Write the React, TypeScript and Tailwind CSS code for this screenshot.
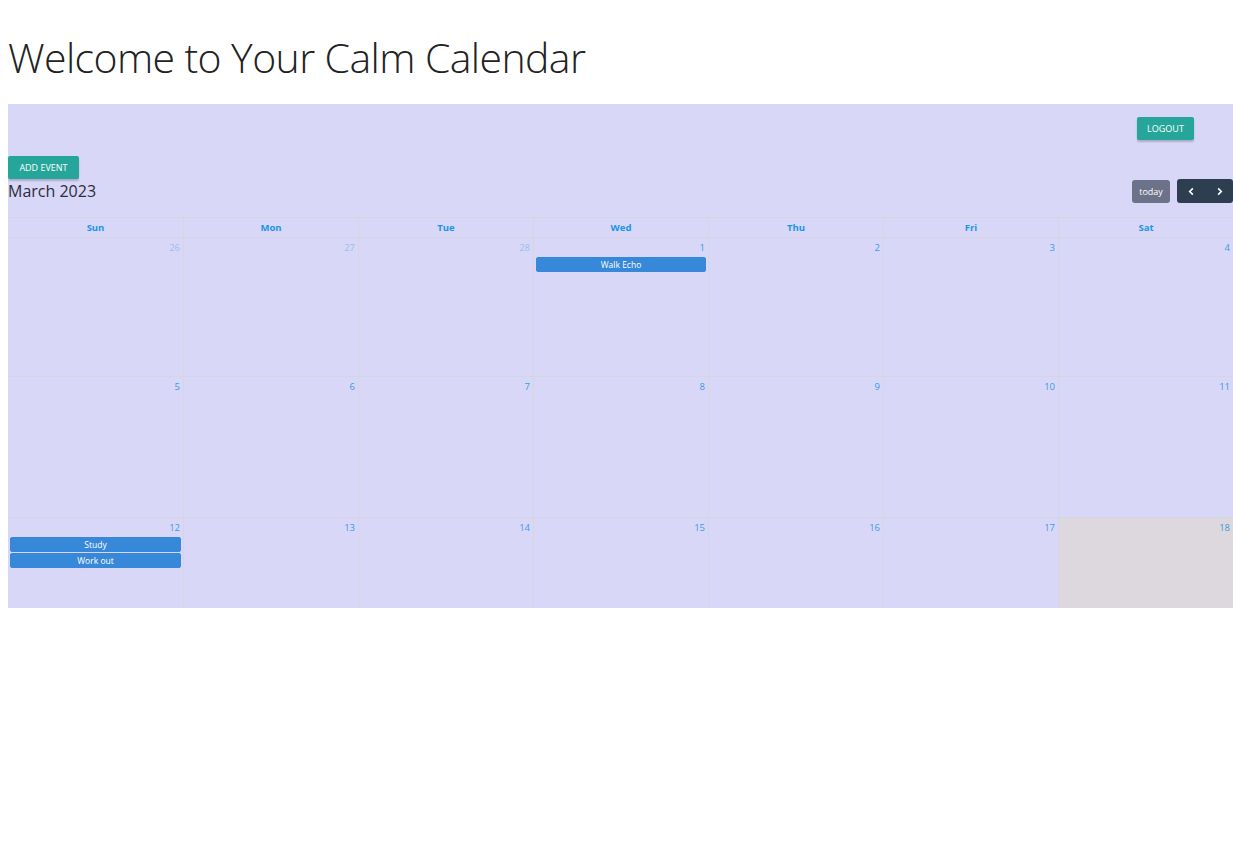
import React from "react"

const days = ["Sun", "Mon", "Tue", "Wed", "Thu", "Fri", "Sat"]

type Cell = { n: number; other?: boolean; today?: boolean; events?: string[] }

const weeks: Cell[][] = [
  [
    { n: 26, other: true },
    { n: 27, other: true },
    { n: 28, other: true },
    { n: 1, events: ["Walk Echo"] },
    { n: 2 },
    { n: 3 },
    { n: 4 },
  ],
  [{ n: 5 }, { n: 6 }, { n: 7 }, { n: 8 }, { n: 9 }, { n: 10 }, { n: 11 }],
  [
    { n: 12, events: ["Study", "Work out"] },
    { n: 13 },
    { n: 14 },
    { n: 15 },
    { n: 16 },
    { n: 17 },
    { n: 18, today: true },
  ],
]

const font = { fontFamily: "'Open Sans', 'Noto Sans', sans-serif" }

export default function App() {
  return (
    <div className="min-h-[863px] bg-white pl-2 text-[#212529]" style={font}>
      <h1 className="pt-[30px] pb-[20px] text-[41px] font-light leading-[54px] tracking-[-0.6px] text-[#222]">
        Welcome to Your Calm Calendar
      </h1>

      <div className="h-[504px] overflow-hidden bg-[#d8d7f7]">
        {/* top bar */}
        <div className="flex justify-end pt-[13px] pr-[39px]">
          <button className="h-[23px] w-[57px] rounded-[2px] bg-[#26a69a] text-[9px] uppercase text-white shadow-[0_2px_2px_rgba(0,0,0,0.2)]">
            Logout
          </button>
        </div>

        <div className="mt-[13px]">
          <button className="h-[23px] w-[71px] rounded-[2px] bg-[#26a69a] text-[9px] uppercase text-white shadow-[0_2px_2px_rgba(0,0,0,0.2)]">
            Add Event
          </button>
        </div>

        {/* toolbar */}
        <div className="flex h-[24px] items-center justify-between">
          <h2 className="text-[16px] leading-none text-[#2c2c3a]">March 2023</h2>
          <div className="flex items-center gap-[7px]">
            <button className="h-[23px] w-[38px] rounded-[3px] bg-[#6c7288] text-[9px] text-white">
              today
            </button>
            <div className="flex h-[24px] w-[56px] rounded-[3px] bg-[#2c3e50] text-white">
              <span className="flex flex-1 items-center justify-center">
                <svg width="9" height="9" viewBox="0 0 10 10" fill="none" stroke="white" strokeWidth="1.8">
                  <path d="M6.5 1.5 3 5l3.5 3.5" />
                </svg>
              </span>
              <span className="flex flex-1 items-center justify-center">
                <svg width="9" height="9" viewBox="0 0 10 10" fill="none" stroke="white" strokeWidth="1.8">
                  <path d="M3.5 1.5 7 5 3.5 8.5" />
                </svg>
              </span>
            </div>
          </div>
        </div>

        {/* grid */}
        <div className="mt-[14px] border-t border-[#d6d6e2]">
          <div className="grid grid-cols-7 border-b border-[#d6d6e2]">
            {days.map((d, i) => (
              <div
                key={d}
                className={`h-[19px] text-center text-[9.5px] font-bold leading-[19px] text-[#1a96e6] ${i > 0 ? "border-l border-[#d6d6e2]" : ""}`}
              >
                {d}
              </div>
            ))}
          </div>
          {weeks.map((w, wi) => (
            <div
              key={wi}
              className={`grid grid-cols-7 border-b border-[#d6d6e2] ${wi === 0 ? "h-[139px]" : "h-[141px]"}`}
            >
              {w.map((c, i) => (
                <div
                  key={i}
                  className={`flex flex-col ${i > 0 ? "border-l border-[#d6d6e2]" : ""} ${c.today ? "bg-[#dcd8dd]" : ""}`}
                >
                  <div
                    className={`pr-[3px] pt-[3px] text-right text-[9.5px] leading-[14px] text-[#3b9be3] ${c.other ? "opacity-40" : ""}`}
                  >
                    {c.n}
                  </div>
                  <div className="mt-[2px] flex flex-col gap-[1px] px-[2px]">
                    {c.events?.map((e) => (
                      <div
                        key={e}
                        className="h-[15px] rounded-[2px] border border-[#3788d8] bg-[#3788d8] text-center text-[8.5px] leading-[13px] text-white"
                      >
                        {e}
                      </div>
                    ))}
                  </div>
                </div>
              ))}
            </div>
          ))}
        </div>
      </div>
    </div>
  )
}
